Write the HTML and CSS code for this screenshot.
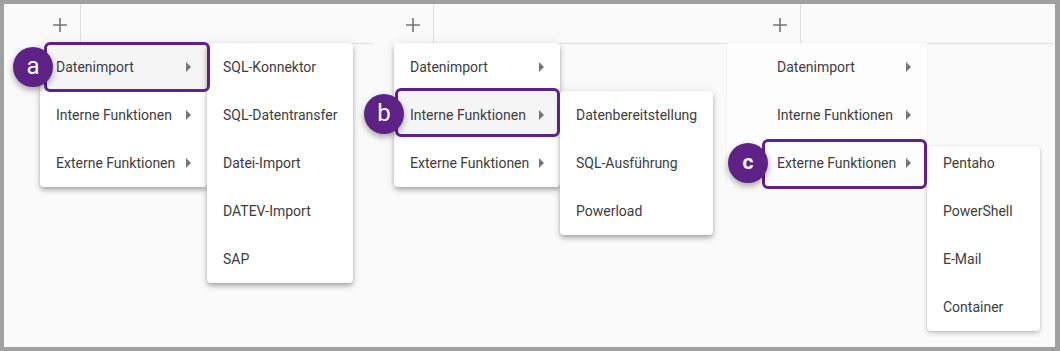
FILE: index.html
```html
<!DOCTYPE html>
<html lang="de">
<head>
<meta charset="utf-8">
<title>Menüs</title>
<link rel="stylesheet" href="styles.css">
</head>
<body>
<div class="frame">

  <section class="panel p1">
    <div class="tabbar">
      <span class="seg lead"></span>
      <span class="add"><svg width="14" height="14" viewBox="0 0 14 14"><path d="M7 0v14M0 7h14" stroke="#757575" stroke-width="1.6"/></svg></span>
      <span class="seg rest"></span>
    </div>
    <div class="menu m1">
      <div class="item active"><span>Datenimport</span><svg class="arr" width="5" height="10" viewBox="0 0 5 10"><path d="M0 0l5 5-5 5z"/></svg></div>
      <div class="item"><span>Interne Funktionen</span><svg class="arr" width="5" height="10" viewBox="0 0 5 10"><path d="M0 0l5 5-5 5z"/></svg></div>
      <div class="item"><span>Externe Funktionen</span><svg class="arr" width="5" height="10" viewBox="0 0 5 10"><path d="M0 0l5 5-5 5z"/></svg></div>
    </div>
    <div class="menu sub s1">
      <div class="item">SQL-Konnektor</div>
      <div class="item">SQL-Datentransfer</div>
      <div class="item">Datei-Import</div>
      <div class="item">DATEV-Import</div>
      <div class="item">SAP</div>
    </div>
    <div class="hl h1"></div>
    <div class="badge b1">a</div>
  </section>

  <section class="panel p2">
    <div class="tabbar">
      <span class="seg lead"></span>
      <span class="gap"></span>
      <span class="add"><svg width="14" height="14" viewBox="0 0 14 14"><path d="M7 0v14M0 7h14" stroke="#757575" stroke-width="1.6"/></svg></span>
      <span class="seg rest"></span>
    </div>
    <div class="menu m2">
      <div class="item"><span>Datenimport</span><svg class="arr" width="5" height="10" viewBox="0 0 5 10"><path d="M0 0l5 5-5 5z"/></svg></div>
      <div class="item active"><span>Interne Funktionen</span><svg class="arr" width="5" height="10" viewBox="0 0 5 10"><path d="M0 0l5 5-5 5z"/></svg></div>
      <div class="item"><span>Externe Funktionen</span><svg class="arr" width="5" height="10" viewBox="0 0 5 10"><path d="M0 0l5 5-5 5z"/></svg></div>
    </div>
    <div class="menu sub s2">
      <div class="item">Datenbereitstellung</div>
      <div class="item">SQL-Ausführung</div>
      <div class="item">Powerload</div>
    </div>
    <div class="hl h2"></div>
    <div class="badge b2">b</div>
  </section>

  <section class="panel p3">
    <div class="tabbar">
      <span class="seg lead"></span>
      <span class="gap"></span>
      <span class="add"><svg width="14" height="14" viewBox="0 0 14 14"><path d="M7 0v14M0 7h14" stroke="#757575" stroke-width="1.6"/></svg></span>
      <span class="seg rest"></span>
    </div>
    <div class="menu m3">
      <div class="item"><span>Datenimport</span><svg class="arr" width="5" height="10" viewBox="0 0 5 10"><path d="M0 0l5 5-5 5z"/></svg></div>
      <div class="item"><span>Interne Funktionen</span><svg class="arr" width="5" height="10" viewBox="0 0 5 10"><path d="M0 0l5 5-5 5z"/></svg></div>
      <div class="item"><span>Externe Funktionen</span><svg class="arr" width="5" height="10" viewBox="0 0 5 10"><path d="M0 0l5 5-5 5z"/></svg></div>
    </div>
    <div class="menu sub s3">
      <div class="list">
        <div class="item">Pentaho</div>
        <div class="item">PowerShell</div>
        <div class="item">E-Mail</div>
        <div class="item">Container</div>
      </div>
    </div>
    <div class="hl h3"></div>
    <div class="badge b3">c</div>
  </section>

</div>
</body>
</html>
```

FILE: styles.css
```css
* { box-sizing: border-box; }

html, body {
  margin: 0;
  padding: 0;
  background: #a0a0a0;
}

.frame {
  position: relative;
  width: 1060px;
  height: 351px;
  border-style: solid;
  border-color: #a0a0a0;
  border-width: 4px 5px 4px 4px;
  background: #fafafa;
  overflow: hidden;
  font-family: Roboto, "Liberation Sans", Arial, sans-serif;
  font-size: 14px;
  color: #3d3d3d;
}

/* panels: three screenshots placed side by side */
.panel {
  position: absolute;
  top: 0;
  bottom: 0;
}
.p1 { left: 0;   width: 368px; }
.p2 { left: 356px; width: 367px; }
.p3 { left: 716px; width: 333px; }

.tabbar {
  display: flex;
  height: 40px;
}
.seg { border-bottom: 1px solid #e0e0e0; }
.rest { flex: 1; }

.add {
  width: 41px;
  display: flex;
  align-items: center;
  justify-content: center;
  padding-right: 1px;
  padding-top: 1px;
  border-right: 1px solid #e0e0e0;
}

.p1 .lead { width: 36px; border-bottom: none; }
.p2 .lead { width: 13px; }
.p2 .gap  { width: 20px; }
.p3 .lead { width: 7px; }
.p3 .gap  { width: 33px; }

/* menus */
.menu {
  position: absolute;
  background: #ffffff;
  border-radius: 4px;
  box-shadow: 0 2px 4px -1px rgba(0,0,0,.2), 0 4px 5px 0 rgba(0,0,0,.14), 0 1px 10px 0 rgba(0,0,0,.12);
}

.item {
  height: 48px;
  display: flex;
  align-items: center;
  justify-content: space-between;
  padding: 0 16px;
  white-space: nowrap;
}
.item.active { background: #f5f5f5; }

.arr { fill: #757575; flex: none; }

.m1 { left: 36px; top: 39px; width: 167px; }
.s1 { left: 203px; top: 39px; width: 146px; }

.m2 { left: 34px; top: 39px; width: 166px; }
.s2 { left: 200px; top: 87px; width: 153px; }

.m3 {
  left: 7px; top: 39px; width: 200px;
  background: #fdfdfd;
  box-shadow: 0 0 2px rgba(0,0,0,.08);
  border-radius: 0 0 2px 2px;
}
.m3 .item { padding-left: 50px; }
.s3 {
  left: 207px; top: 142px; width: 113px; height: 185px;
  overflow: hidden;
  box-shadow: 0 2px 4px -1px rgba(0,0,0,.16), 0 3px 5px 0 rgba(0,0,0,.10), 0 0 2px 0 rgba(0,0,0,.14);
}
.s3 .list { margin-top: -7px; }

/* annotation outlines */
.hl {
  position: absolute;
  border: 3px solid #5e2287;
  border-radius: 6px;
  height: 50px;
}
.h1 { left: 40px; top: 38px; width: 166px; }
.h2 { left: 35px; top: 84px; width: 165px; height: 49px; }
.h3 { left: 42px; top: 135px; width: 165px; }

/* badges */
.badge {
  position: absolute;
  width: 40px;
  height: 40px;
  border-radius: 50%;
  background: #5e2287;
  color: #ffffff;
  display: flex;
  align-items: center;
  justify-content: center;
  font-size: 24px;
  line-height: 1;
  padding-bottom: 3px;
  box-shadow: 0 3px 6px rgba(0,0,0,.35);
}
.b1 { left: 9px; top: 43px; }
.b2 { left: 4px; top: 90px; }
.b3 { left: 8px; top: 139px; font-weight: bold; font-size: 21px; padding-bottom: 1px; }
```
